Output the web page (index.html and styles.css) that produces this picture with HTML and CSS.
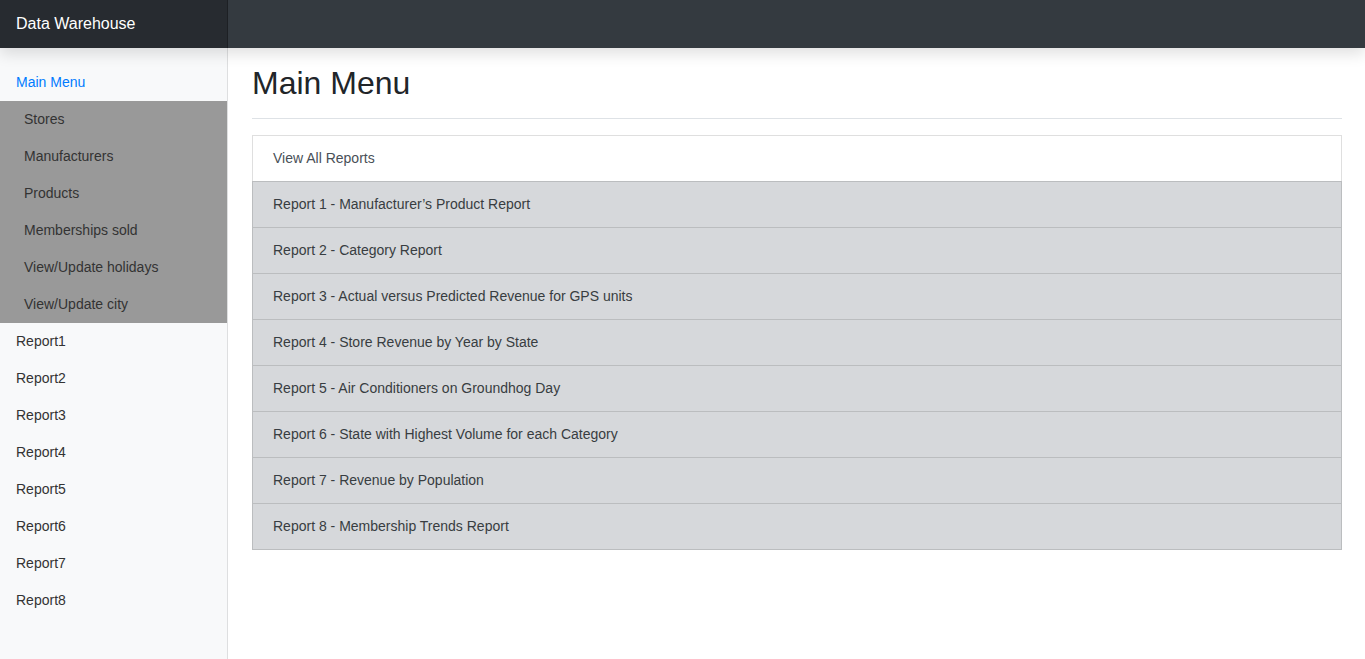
FILE: index.html
```html
<!DOCTYPE html>
<html lang="en">
<head>
<meta charset="utf-8">
<title>Data Warehouse</title>
<link rel="stylesheet" href="styles.css">
</head>
<body>
<header class="navbar">
  <a class="brand" href="#">Data Warehouse</a>
</header>
<div class="layout">
  <nav class="sidebar">
    <ul class="nav">
      <li><a class="nav-link active" href="#">Main Menu</a></li>
      <li>
        <ul class="subnav">
          <li><a class="nav-link sub" href="#">Stores</a></li>
          <li><a class="nav-link sub" href="#">Manufacturers</a></li>
          <li><a class="nav-link sub" href="#">Products</a></li>
          <li><a class="nav-link sub" href="#">Memberships sold</a></li>
          <li><a class="nav-link sub" href="#">View/Update holidays</a></li>
          <li><a class="nav-link sub" href="#">View/Update city</a></li>
        </ul>
      </li>
      <li><a class="nav-link" href="#">Report1</a></li>
      <li><a class="nav-link" href="#">Report2</a></li>
      <li><a class="nav-link" href="#">Report3</a></li>
      <li><a class="nav-link" href="#">Report4</a></li>
      <li><a class="nav-link" href="#">Report5</a></li>
      <li><a class="nav-link" href="#">Report6</a></li>
      <li><a class="nav-link" href="#">Report7</a></li>
      <li><a class="nav-link" href="#">Report8</a></li>
    </ul>
  </nav>
  <main class="main">
    <div class="page-head">
      <h1 class="title">Main Menu</h1>
    </div>
    <div class="list-group">
      <a class="list-item" href="#">View All Reports</a>
      <a class="list-item secondary" href="#">Report 1 - Manufacturer’s Product Report</a>
      <a class="list-item secondary" href="#">Report 2 - Category Report</a>
      <a class="list-item secondary" href="#">Report 3 - Actual versus Predicted Revenue for GPS units</a>
      <a class="list-item secondary" href="#">Report 4 - Store Revenue by Year by State</a>
      <a class="list-item secondary" href="#">Report 5 - Air Conditioners on Groundhog Day</a>
      <a class="list-item secondary" href="#">Report 6 - State with Highest Volume for each Category</a>
      <a class="list-item secondary" href="#">Report 7 - Revenue by Population</a>
      <a class="list-item secondary" href="#">Report 8 - Membership Trends Report</a>
    </div>
  </main>
</div>
</body>
</html>
```

FILE: styles.css
```css
* { box-sizing: border-box; }
html, body { height: 100%; }
body {
  margin: 0;
  font-family: "Liberation Sans", Arial, sans-serif;
  font-size: 14px;
  line-height: 1.5;
  color: #212529;
  background: #fff;
  display: flex;
  flex-direction: column;
  overflow: hidden;
}
a { text-decoration: none; }
ul { list-style: none; margin: 0; padding: 0; }

.navbar {
  position: relative;
  z-index: 2;
  height: 48px;
  flex: 0 0 48px;
  background: #343a40;
  display: flex;
  box-shadow: 0 6px 14px rgba(0, 0, 0, 0.12);
}
.brand {
  width: 228px;
  padding: 0 16px;
  display: flex;
  align-items: center;
  font-size: 16px;
  color: #fff;
  background: rgba(0, 0, 0, 0.25);
  box-shadow: inset -1px 0 0 rgba(0, 0, 0, 0.25);
}

.layout {
  flex: 1;
  display: flex;
  min-height: 0;
}
.sidebar {
  width: 228px;
  flex: 0 0 228px;
  background: #f8f9fa;
  box-shadow: inset -1px 0 0 rgba(0, 0, 0, 0.1);
  padding-top: 16px;
}
.nav-link {
  display: block;
  padding: 8px 16px;
  color: #333;
}
.nav-link.active { color: #007bff; }
.subnav {
  background: #999;
  width: 227px;
}
.nav-link.sub { padding-left: 24px; color: #333; }

.main {
  flex: 1;
  padding: 16px 23px 0 24px;
}
.page-head {
  border-bottom: 1px solid #dee2e6;
  padding-bottom: 8px;
  margin-bottom: 16px;
}
.title {
  margin: 0 0 8px;
  font-size: 32px;
  font-weight: 400;
  line-height: 1.2;
  color: #212529;
}
.list-group {
  display: flex;
  flex-direction: column;
}
.list-item {
  display: block;
  padding: 12px 20px;
  color: #495057;
  background: #fff;
  border: 1px solid rgba(0, 0, 0, 0.125);
  margin-bottom: -1px;
}
.list-item.secondary {
  background: #d6d8db;
  color: #383d41;
}
```
